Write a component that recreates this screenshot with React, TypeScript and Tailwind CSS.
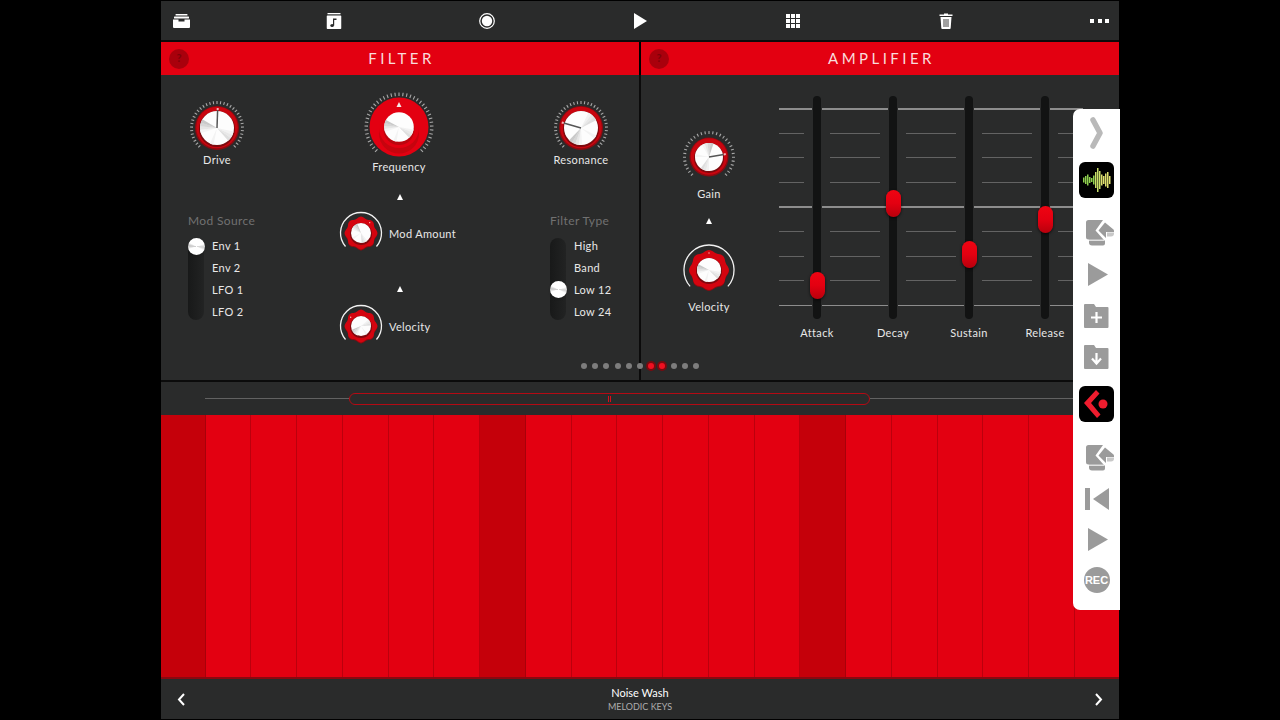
import React from 'react'

const RED = '#e30011'
const GREY = '#9b9b9b'

function polar(cx: number, cy: number, r: number, deg: number) {
  const a = ((deg - 90) * Math.PI) / 180
  return [cx + r * Math.cos(a), cy + r * Math.sin(a)]
}

function wedge(cx: number, cy: number, r: number, a: number, b: number) {
  const [x1, y1] = polar(cx, cy, r, a)
  const [x2, y2] = polar(cx, cy, r, b)
  return `M${cx} ${cy}L${x1} ${y1}A${r} ${r} 0 0 1 ${x2} ${y2}Z`
}

function arc(cx: number, cy: number, r: number, a: number, b: number) {
  const [x1, y1] = polar(cx, cy, r, a)
  const [x2, y2] = polar(cx, cy, r, b)
  return `M${x1} ${y1}A${r} ${r} 0 1 1 ${x2} ${y2}`
}

function blob(cx: number, cy: number, r: number, amp: number) {
  const pts: string[] = []
  for (let i = 0; i < 96; i++) {
    const d = (i / 96) * 360
    const [x, y] = polar(cx, cy, r + amp * Math.cos((d * 8 * Math.PI) / 180), d)
    pts.push(`${x.toFixed(2)} ${y.toFixed(2)}`)
  }
  return `M${pts.join('L')}Z`
}

// brushed metal cap, the shading is stepped wedges fading out to white
function Cap({ c, r, turn = 0 }: { c: number; r: number; turn?: number }) {
  const shades = [
    { from: 250, fill: '#f4f4f4' },
    { from: 262, fill: '#e6e6e6' },
    { from: 274, fill: '#d6d6d6' },
    { from: 286, fill: '#c9c9c9' },
    { from: 100, fill: '#f2f2f2' },
    { from: 112, fill: '#e8e8e8' },
    { from: 124, fill: '#dedede' },
    { from: 190, fill: '#f3f3f3' },
  ]
  return (
    <g>
      <circle cx={c} cy={c} r={r} fill="#fdfdfd" />
      {shades.map((s) => (
        <path key={s.from} d={wedge(c, c, r, turn + s.from, turn + s.from + 12.5)} fill={s.fill} />
      ))}
    </g>
  )
}

function Ticks({ c, r, len, count }: { c: number; r: number; len: number; count: number }) {
  const items = []
  for (let i = 0; i < count; i++) {
    const d = -136 + (272 * i) / (count - 1)
    const [x1, y1] = polar(c, c, r, d)
    const [x2, y2] = polar(c, c, r + len, d)
    items.push(<line key={i} x1={x1} y1={y1} x2={x2} y2={y2} stroke="#a9a9a9" strokeWidth="1.1" />)
  }
  return <g>{items}</g>
}

// small knob with a dark red ring, a metal cap and a pointer
function RingKnob({ size, ring, cap, angle, ticks = 35 }: { size: number; ring: number; cap: number; angle: number; ticks?: number }) {
  const c = size / 2
  const [px, py] = polar(c, c, cap + 1, angle)
  const [tx, ty] = polar(c, c, cap + 3, angle)
  return (
    <svg width={size} height={size} className="shrink-0">
      <Ticks c={c} r={c - 3} len={3} count={ticks} />
      <circle cx={c} cy={c} r={ring} fill="#8c0a10" />
      <circle cx={c} cy={c - 0.5} r={ring - 1.2} fill="#c9050f" />
      <circle cx={c} cy={c + 1} r={cap + 1} fill="#7c0a0e" />
      <Cap c={c} r={cap} turn={angle} />
      <line x1={c} y1={c} x2={px} y2={py} stroke="#555" strokeWidth="1.5" />
      <line x1={px} y1={py} x2={tx} y2={ty} stroke="#f3b4b4" strokeWidth="2" />
    </svg>
  )
}

function BigKnob() {
  return (
    <svg width="70" height="70" className="shrink-0">
      <Ticks c={35} r={31} len={3.5} count={41} />
      <circle cx="35" cy="35" r="29.5" fill={RED} />
      <circle cx="35" cy="41.5" r="20" fill="#c6040e" />
      <circle cx="35" cy="36" r="20" fill={RED} />
      <circle cx="35" cy="37.5" r="15.5" fill="#bb050e" />
      <Cap c={35} r={14.8} turn={0} />
      <path d="M35 10L37.5 15H32.5Z" fill="#f6e8e8" />
    </svg>
  )
}

// knob with the wavy red body and the white arc around it
function WavyKnob({ size, arcR, body, cap, dot }: { size: number; arcR: number; body: number; cap: number; dot: number }) {
  const c = size / 2
  const [dx, dy] = polar(c, c, body - 2, dot)
  return (
    <svg width={size} height={size} className="shrink-0">
      <path d={arc(c, c, arcR, -131, 131)} fill="none" stroke="#f2f2f2" strokeWidth="1.3" />
      <path d={blob(c, c + 1, body, 0.9)} fill="#8c0a10" />
      <path d={blob(c, c, body, 0.9)} fill="#d4040f" />
      <circle cx={c} cy={c + 1} r={cap + 1} fill="#80090e" />
      <Cap c={c} r={cap} turn={dot} />
      <circle cx={dx} cy={dy} r="0.7" fill="#ffb9b9" />
    </svg>
  )
}

function Label({ children, className = '' }: { children: React.ReactNode; className?: string }) {
  return <div className={`text-[11px] leading-[14px] tracking-[0.03em] text-[#e8e8e8] whitespace-nowrap ${className}`}>{children}</div>
}

function UpTriangle({ className = '' }: { className?: string }) {
  return <div className={`w-0 h-0 border-x-[3.5px] border-x-transparent border-b-[6px] border-b-white ${className}`} />
}

const thumbMetal = 'bg-[conic-gradient(#fff_0deg,#fff_70deg,#cfcfcf_95deg,#fff_120deg,#fff_250deg,#c4c4c4_275deg,#fff_300deg)]'

function Switch({ title, options, active }: { title: string; options: string[]; active: number }) {
  return (
    <div>
      <div className="mt-px text-[12px] leading-[14px] tracking-[0.03em] text-[#717171] whitespace-nowrap">{title}</div>
      <div className="flex mt-[10px]">
        <div className="relative w-4 h-[82px] rounded-full bg-gradient-to-r from-[#181919] to-[#222323]">
          <div className={`absolute left-[-0.5px] w-[17px] h-[17px] rounded-full shadow-sm ${thumbMetal} ${active === 0 ? 'top-0' : 'top-[43px]'}`} />
        </div>
        <div className="ml-2 flex flex-col gap-2 pt-px">
          {options.map((o) => (
            <Label key={o}>{o}</Label>
          ))}
        </div>
      </div>
    </div>
  )
}

function Header({ title }: { title: string }) {
  return (
    <div className="relative flex-1 h-[33px] flex items-center justify-center bg-[#e30011]">
      <div className="absolute left-2 w-5 h-5 rounded-full bg-[#a9000c] flex items-center justify-center text-[11px] font-bold text-[#7f0008]">?</div>
      <div className="text-[15px] tracking-[0.23em] text-[#f9dcdc] font-normal pl-[3px]">{title}</div>
    </div>
  )
}

function FaderLine({ major }: { major: boolean }) {
  return (
    <div className="flex justify-between">
      <div className={major ? 'w-[33px] h-[1.5px] bg-[#8d8d8d]' : 'w-[25px] h-px bg-[#636363]'} />
      <div className={major ? 'w-[33px] h-[1.5px] bg-[#8d8d8d]' : 'w-[25px] h-px bg-[#636363]'} />
    </div>
  )
}

function Fader({ label, thumb }: { label: string; thumb: string }) {
  return (
    <div className="w-[76px] flex flex-col items-center">
      <div className="relative w-full h-[223px]">
        <div className="absolute inset-x-0 top-[12px] h-[198px] flex flex-col justify-between">
          {[true, false, false, false, true, false, false, false, true].map((m, i) => (
            <FaderLine key={i} major={m} />
          ))}
        </div>
        <div className="absolute left-[34px] top-0 w-2 h-full rounded-full bg-[#121313]" />
        <div className={`absolute left-[30.5px] w-[15px] h-[27px] rounded-full bg-gradient-to-b from-[#f00412] via-[#e30011] to-[#b8000c] shadow-[0_1px_3px_rgba(0,0,0,0.7)] ${thumb}`} />
      </div>
      <Label className="mt-[7px]">{label}</Label>
    </div>
  )
}

function ImportIcon() {
  return (
    <svg width="29" height="26" viewBox="0 0 29 26" className="block">
      {/* back card */}
      <path d="M3 19.5H17.5L19 21V23.5a2 2 0 0 1-2 2H6a3 3 0 0 1-3-3Z" fill={GREY} />
      <path d="M2 20.2H18" stroke="#fff" strokeWidth="1" />
      {/* front card with the chevron cut out */}
      <path d="M2.5 0H17L9.5 10.5L17.5 19.5H2.5a2.5 2.5 0 0 1-2.5-2.5V2.5A2.5 2.5 0 0 1 2.5 0Z" fill={GREY} />
      {/* arrow */}
      <path d="M12.5 10.5L19 2.5L27.5 9.5A2 2 0 0 1 28 11V12H20V18Z" fill={GREY} />
      <path d="M21 12.5H28V13.5A3 3 0 0 1 25 16.5H21Z" fill={GREY} opacity="0.55" />
    </svg>
  )
}

function PlaySide() {
  return (
    <svg width="20" height="23" viewBox="0 0 20 23" className="block">
      <path d="M0 0L20 11.5L0 23Z" fill={GREY} />
    </svg>
  )
}

function FolderIcon({ plus }: { plus: boolean }) {
  return (
    <svg width="25" height="24" viewBox="0 0 25 24" className="block">
      <path d="M1 0H10L12 3H23.5a1 1 0 0 1 1 1V23a1 1 0 0 1-1 1H1a1 1 0 0 1-1-1V1a1 1 0 0 1 1-1Z" fill={GREY} />
      {plus ? (
        <path d="M12.5 8V19M7 13.5H18" stroke="#fff" strokeWidth="2.2" />
      ) : (
        <path d="M12.5 8V18M8 13.5L12.5 18.5L17 13.5" stroke="#fff" strokeWidth="2.2" fill="none" />
      )}
    </svg>
  )
}

function WaveIcon() {
  const bars = [5, 8, 11, 6, 4, 9, 16, 24, 18, 11, 8, 13, 16, 8]
  return (
    <div className="w-[35px] h-[36px] rounded-[6px] bg-black flex items-center justify-center">
      <svg width="28" height="26" viewBox="0 0 28 26" className="block">
        {bars.map((h, i) => (
          <rect key={i} x={i * 2} y={13 - h / 2} width="1.5" height={h} fill={i < 6 ? '#8fd04f' : i < 9 ? '#c9de6a' : '#dfe070'} />
        ))}
      </svg>
    </div>
  )
}

function CubaseIcon() {
  return (
    <div className="w-[35px] h-[36px] rounded-[6px] bg-black flex items-center justify-center">
      <svg width="27" height="30" viewBox="0 0 27 30" className="block">
        <path d="M13 1L1 14L14 29L17.5 25.5L8 14L16.5 4.5Z" fill="#ef1c2e" />
        <circle cx="20" cy="15" r="4.5" fill="#ef1c2e" />
      </svg>
    </div>
  )
}

function SidePanel() {
  return (
    <div className="absolute left-[912px] top-[109px] w-[47px] h-[501px] bg-white rounded-l-[7px] flex flex-col items-center pt-[8px]">
      <svg width="14" height="32" viewBox="0 0 14 32" className="ml-[1px] block">
        <path d="M3 3L10 16L3 29" fill="none" stroke="#b9b9b9" strokeWidth="5.5" strokeLinecap="round" strokeLinejoin="round" />
      </svg>
      <div className="mt-[13px]"><WaveIcon /></div>
      <div className="mt-[22px] ml-[8px]"><ImportIcon /></div>
      <div className="mt-[17px] ml-[2px]"><PlaySide /></div>
      <div className="mt-[18px]"><FolderIcon plus /></div>
      <div className="mt-[17px]"><FolderIcon plus={false} /></div>
      <div className="mt-[17px]"><CubaseIcon /></div>
      <div className="mt-[23px] ml-[8px]"><ImportIcon /></div>
      <div className="mt-[17px]">
        <svg width="24" height="22" viewBox="0 0 24 22" className="block">
          <rect width="5" height="22" fill={GREY} />
          <path d="M24 0V22L8 11Z" fill={GREY} />
        </svg>
      </div>
      <div className="mt-[18px] ml-[2px]"><PlaySide /></div>
      <div className="mt-[16px] w-[26px] h-[26px] rounded-full bg-[#9b9b9b] flex items-center justify-center text-[11px] font-bold text-white font-['Liberation_Sans',sans-serif]">REC</div>
    </div>
  )
}

function TopBar() {
  return (
    <div className="h-[39px] mt-px flex items-center justify-between bg-[#2a2b2b]">
      <div className="w-10 flex justify-center">
        <svg width="17" height="14" viewBox="0 0 17 14" fill="#fff">
          <rect x="2.5" y="0" width="12" height="1.5" rx="0.5" />
          <rect x="1" y="2.5" width="15" height="2" rx="0.5" />
          <path d="M0 5.5H5.5V7.5H11.5V5.5H17V13a1 1 0 0 1-1 1H1a1 1 0 0 1-1-1Z" />
        </svg>
      </div>
      <div className="w-10 flex justify-center">
        <svg width="15" height="16" viewBox="0 0 15 16" className="-translate-x-[0.5px]">
          <rect x="1" width="13" height="1.3" fill="#fff" />
          <rect y="2.5" width="15" height="13.5" rx="1" fill="#fff" />
          <ellipse cx="5.6" cy="12.4" rx="1.8" ry="1.5" fill="#2a2b2b" />
          <path d="M6.5 5.5H10V7H7.7V12.4H6.5Z" fill="#2a2b2b" />
        </svg>
      </div>
      <div className="w-10 flex justify-center">
        <svg width="16" height="16" viewBox="0 0 16 16">
          <circle cx="8" cy="8" r="7.3" fill="none" stroke="#fff" strokeWidth="1.2" />
          <circle cx="8" cy="8" r="5.2" fill="#fff" />
        </svg>
      </div>
      <div className="w-10 flex justify-center">
        <svg width="13" height="16" viewBox="0 0 13 16">
          <path d="M0 0L13 8L0 16Z" fill="#fff" />
        </svg>
      </div>
      <div className="w-10 flex justify-center">
        <div className="grid grid-cols-3 gap-px w-[14px] h-[14px]">
          {[0, 1, 2, 3, 4, 5, 6, 7, 8].map((i) => (
            <div key={i} className="bg-white" />
          ))}
        </div>
      </div>
      <div className="w-10 flex justify-center">
        <svg width="14" height="16" viewBox="0 0 14 16">
          <path d="M5 1.5V0.5H9V1.5H13.5V3H0.5V1.5Z" fill="#fff" />
          <path d="M1.5 4H12.5L11.7 15a1 1 0 0 1-1 1H3.3a1 1 0 0 1-1-1Z" fill="#fff" />
          <path d="M5 6V14M7 6V14M9 6V14" stroke="#2a2b2b" strokeWidth="0.9" />
        </svg>
      </div>
      <div className="w-10 flex justify-center gap-[3.5px] pl-px">
        <div className="w-[4px] h-[4px] bg-white" />
        <div className="w-[4px] h-[4px] bg-white" />
        <div className="w-[4px] h-[4px] bg-white" />
      </div>
    </div>
  )
}

function FilterPanel() {
  return (
    <div className="w-[478px] flex bg-[#2a2b2b]">
      <div className="w-[112px] flex flex-col pt-[26px]">
        <div className="flex flex-col items-center">
          <RingKnob size={54} ring={22} cap={17} angle={2} />
          <Label className="-mt-[2px]">Drive</Label>
        </div>
        <div className="mt-[46px] ml-[27px]">
          <Switch title="Mod Source" options={['Env 1', 'Env 2', 'LFO 1', 'LFO 2']} active={0} />
        </div>
      </div>

      <div className="w-[254px] pt-[17px]">
        <div className="w-[252px] flex flex-col items-center">
          <BigKnob />
          <Label className="-mt-[2px]">Frequency</Label>
          <UpTriangle className="mt-[20px] ml-[2px]" />
        </div>
        <div className="flex items-center gap-[6px] ml-[66px] mt-[11px]">
          <WavyKnob size={44} arcR={20.5} body={15.5} cap={10} dot={40} />
          <Label className="mt-[2px]">Mod Amount</Label>
        </div>
        <div className="w-[252px] flex justify-center mt-[31px]">
          <UpTriangle className="ml-[2px]" />
        </div>
        <div className="flex items-center gap-[6px] ml-[66px] mt-[12px]">
          <WavyKnob size={44} arcR={20.5} body={15.5} cap={10} dot={-50} />
          <Label className="mt-[2px]">Velocity</Label>
        </div>
      </div>

      <div className="w-[112px] flex flex-col pt-[26px] -ml-[2px]">
        <div className="flex flex-col items-center">
          <RingKnob size={54} ring={22} cap={17} angle={-74} />
          <Label className="-mt-[2px]">Resonance</Label>
        </div>
        <div className="mt-[46px] ml-[25px]">
          <Switch title="Filter Type" options={['High', 'Band', 'Low 12', 'Low 24']} active={2} />
        </div>
      </div>
    </div>
  )
}

function AmpPanel() {
  return (
    <div className="w-[478px] flex bg-[#2a2b2b] overflow-hidden">
      <div className="w-[138px] pr-[2px] pt-[56px] flex flex-col items-center shrink-0">
        <RingKnob size={52} ring={19.5} cap={14} angle={80} ticks={31} />
        <Label className="mt-[4px]">Gain</Label>
        <UpTriangle className="mt-[17px]" />
        <div className="mt-[19px]">
          <WavyKnob size={54} arcR={25} body={19} cap={12} dot={0} />
        </div>
        <Label className="mt-[3px]">Velocity</Label>
      </div>
      <div className="flex pt-[21px] shrink-0">
        <Fader label="Attack" thumb="top-[176px]" />
        <Fader label="Decay" thumb="top-[94px]" />
        <Fader label="Sustain" thumb="top-[145px]" />
        <Fader label="Release" thumb="top-[110px]" />
      </div>
    </div>
  )
}

function PageDots() {
  return (
    <div className="absolute left-[420px] top-[363px] flex gap-[5.2px] items-center">
      {[0, 1, 2, 3, 4, 5, 6, 7, 8, 9, 10].map((i) =>
        i === 6 || i === 7 ? (
          <div key={i} className="w-[6px] h-[6px] rounded-full bg-[#f01020] ring-2 ring-[#7a0a0f]" />
        ) : (
          <div key={i} className="w-[6px] h-[6px] rounded-full bg-[#7d7d7d]" />
        ),
      )}
    </div>
  )
}

function Keys() {
  const keys = Array.from({ length: 21 }, (_, i) => i)
  return (
    <div className="relative h-[264px] flex overflow-hidden">
      <div className="flex -ml-[1.25px]">
        {keys.map((i) =>
          i % 7 === 0 ? (
            <div key={i} className="w-[45.75px] shrink-0 bg-[#c5000a] border-r border-[#a8000a]" />
          ) : (
            <div key={i} className="w-[45.75px] shrink-0 bg-[#e30011] border-r border-[#bb000d]" />
          ),
        )}
      </div>
      <div className="absolute inset-x-0 bottom-0 h-[2px] bg-[#8a0810]" />
    </div>
  )
}

export default function App() {
  return (
    <div className="w-[1280px] h-[720px] bg-black flex justify-center overflow-hidden font-['Lato',sans-serif]">
      <div className="relative w-[958px] flex flex-col">
        <TopBar />
        <div className="h-[2px] bg-[#0b0b0b]" />

        <div className="flex gap-[2px]">
          <Header title="FILTER" />
          <Header title="AMPLIFIER" />
        </div>

        <div className="h-[305px] flex gap-[2px] bg-[#0b0b0b]">
          <FilterPanel />
          <AmpPanel />
        </div>
        <div className="h-[2px] bg-[#0b0b0b]" />

        {/* pitch strip */}
        <div className="h-[33px] bg-[#2a2b2b] flex items-center pl-[44px]">
          <div className="w-[144px] h-px bg-[#626262]" />
          <div className="w-[521px] h-3 rounded-full border border-[#b40a14] flex items-center justify-center gap-px">
            <div className="w-px h-1.5 bg-[#d6101c]" />
            <div className="w-px h-1.5 bg-[#d6101c]" />
          </div>
          <div className="flex-1 h-px bg-[#626262]" />
        </div>

        <Keys />

        {/* preset name */}
        <div className="h-10 bg-[#2a2b2b] flex items-center justify-between px-4">
          <svg width="9" height="13" viewBox="0 0 9 13">
            <path d="M7 1L2 6.5L7 12" fill="none" stroke="#fff" strokeWidth="2" />
          </svg>
          <div className="flex flex-col items-center">
            <div className="text-[11px] leading-[14px] text-white">Noise Wash</div>
            <div className="text-[9px] leading-[13px] text-[#adadad]">MELODIC KEYS</div>
          </div>
          <svg width="9" height="13" viewBox="0 0 9 13">
            <path d="M2 1L7 6.5L2 12" fill="none" stroke="#fff" strokeWidth="2" />
          </svg>
        </div>

        <PageDots />
        <SidePanel />
      </div>
    </div>
  )
}
